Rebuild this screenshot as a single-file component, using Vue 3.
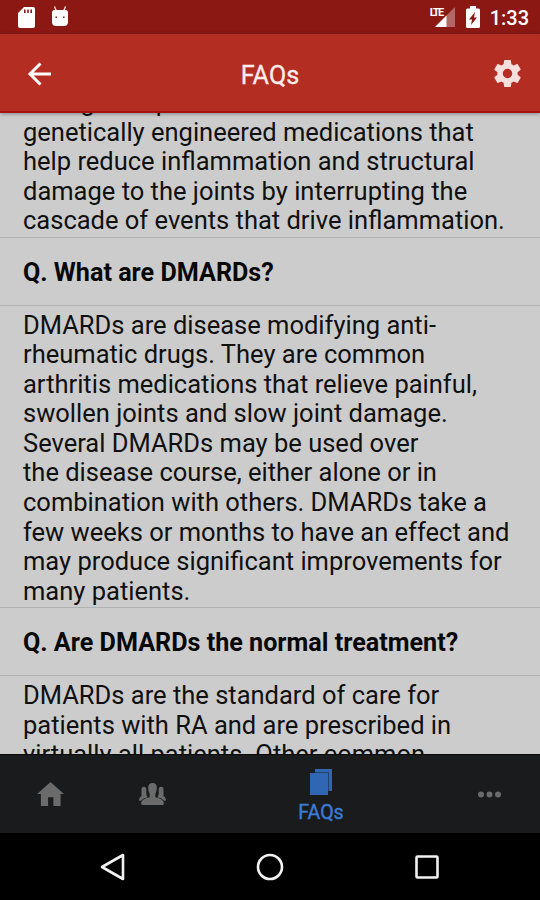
<template>
  <div class="screen">
    <div class="status-bar">
      <svg class="status-sd" viewBox="0 0 17 21">
        <path
          fill="#fff"
          fill-rule="evenodd"
          d="M6 0h9q2 0 2 2v17q0 2-2 2H2q-2 0-2-2V6zM6 2.500V6h1.600V2.500zM9.200 2.500V6h1.600V2.500zM12.400 2.500V6H14V2.500z"
        />
      </svg>
      <svg class="status-bug" viewBox="0 0 18 21">
        <path d="M3.500 0.500l2 5M14.500 0.500l-2 5" stroke="#f3cfcd" stroke-width="1.500" />
        <path
          fill="#fff"
          fill-rule="evenodd"
          d="M3 4h12Q17 4 17 6.500V16q0 4-4 4H5q-4 0-4-4V6.500Q1 4 3 4zM4.500 10.500V12H6v-1.500zM12 10.500V12h1.500v-1.500z"
        />
      </svg>
      <div class="status-right">
        <div class="signal">
          <span class="lte">LTE</span>
          <svg viewBox="0 0 21 21">
            <path fill="#fff" fill-opacity="0.35" d="M21 0v20H1z" />
            <path fill="#fff" d="M12.500 8.500V20H1z" />
          </svg>
        </div>
        <svg class="battery" viewBox="0 0 14 22">
          <path
            fill="#fff"
            fill-rule="evenodd"
            d="M4 0h6v2.500h2.500Q14 2.500 14 4v16.500q0 1.500-1.500 1.500h-11Q0 22 0 20.500V4q0-1.500 1.500-1.500H4zM9 6l-6 7.500h3L5 19l6-7.500H8z"
          />
        </svg>
        <span class="clock">1:33</span>
      </div>
    </div>

    <header class="header">
      <svg class="back" viewBox="0 0 24 24">
        <path
          d="M23.500 12H3M13 1.500L2.500 12 13 22.500"
          fill="none"
          stroke="#fff"
          stroke-width="3"
        />
      </svg>
      <h1 class="title">FAQs</h1>
      <svg class="gear" viewBox="2 2 20 20">
        <path
          fill="#f6dedd"
          d="M19.430 12.980c.040-.320.070-.640.070-.980s-.030-.660-.070-.980l2.110-1.650c.190-.150.240-.420.120-.640l-2-3.460c-.120-.220-.390-.300-.610-.220l-2.490 1c-.520-.400-1.080-.730-1.690-.980l-.380-2.650C14.460 2.180 14.250 2 14 2h-4c-.250 0-.460.180-.490.420l-.380 2.650c-.610.250-1.170.590-1.690.980l-2.490-1c-.230-.090-.490 0-.610.220l-2 3.460c-.130.220-.070.490.120.640l2.110 1.650c-.040.320-.070.650-.070.980s.030.660.070.980l-2.110 1.650c-.190.150-.240.420-.120.640l2 3.460c.120.220.390.300.610.220l2.490-1c.520.400 1.080.730 1.690.980l.380 2.650c.030.240.240.420.490.420h4c.250 0 .460-.180.490-.420l.380-2.650c.610-.250 1.170-.590 1.690-.980l2.490 1c.230.090.490 0 .610-.220l2-3.460c.120-.220.070-.490-.120-.640zM12 15.500a3.500 3.500 0 1 1 0-7 3.500 3.500 0 0 1 0 7z"
        />
      </svg>
    </header>

    <main class="content">
      <div class="list">
        <template v-for="item in faqs" :key="item.answer[0]">
          <h2 v-if="item.question" class="question">Q. {{ item.question }}</h2>
          <div class="answer">
            <div v-for="line in item.answer" :key="line">{{ line }}</div>
          </div>
        </template>
      </div>
    </main>

    <nav class="tabs">
      <a class="tab">
        <svg class="home" viewBox="0 0 28 25">
          <path fill="currentColor" d="M14 0l14 12.500h-3.500V25H17v-9h-5.500v9H4V12.500H0z" />
        </svg>
      </a>
      <a class="tab">
        <svg class="people" viewBox="0 0 28 23">
          <g fill="currentColor">
            <path
              d="M5 4q2.500 0 2.500 3v4q0 2 1.500 4-5 1-7 3.500H0q0-4 2.500-5V7Q2.500 4 5 4zM23 4q-2.500 0-2.500 3v4q0 2-1.500 4 5 1 7 3.500h2q0-4-2.500-5V7q0-3-2.500-3z"
            />
            <path
              d="M14 0q4.500 0 4.500 5 0 4-1.500 6.500V15q9 2 9 6.500 0 1.500-1.500 1.500h-21Q2 23 2 21.500 2 17 11 15v-3.500Q9.500 9 9.500 5q0-5 4.500-5z"
            />
          </g>
        </svg>
      </a>
      <a class="tab active">
        <svg class="docs" viewBox="0 0 22 26">
          <path fill="currentColor" d="M5 0h17v22h-3V3H5z" />
          <path fill="currentColor" fill-opacity="0.5" d="M5 3h14v19h-1V4H5z" />
          <path fill="currentColor" d="M0 4h18v22H0z" />
        </svg>
        <span class="tab-label">FAQs</span>
      </a>
      <a class="tab">
        <svg class="more" viewBox="0 0 23 7">
          <g fill="currentColor">
            <circle cx="3" cy="3.500" r="3" />
            <circle cx="11.500" cy="3.500" r="3" />
            <circle cx="20" cy="3.500" r="3" />
          </g>
        </svg>
      </a>
    </nav>

    <div class="system-nav">
      <svg viewBox="0 0 28 28">
        <path d="M24 2v24L3 14z" />
      </svg>
      <svg viewBox="0 0 28 28">
        <circle cx="14" cy="14" r="12" />
      </svg>
      <svg viewBox="0 0 28 28">
        <rect x="3.500" y="3.500" width="21" height="21" rx="1" />
      </svg>
    </div>
  </div>
</template>

<script setup>
const faqs = [
  {
    answer: [
      "Biologic response modifiers are",
      "genetically engineered medications that",
      "help reduce inflammation and structural",
      "damage to the joints by interrupting the",
      "cascade of events that drive inflammation.",
    ],
  },
  {
    question: "What are DMARDs?",
    answer: [
      "DMARDs are disease modifying anti-",
      "rheumatic drugs. They are common",
      "arthritis medications that relieve painful,",
      "swollen joints and slow joint damage.",
      "Several DMARDs may be used over",
      "the disease course, either alone or in",
      "combination with others. DMARDs take a",
      "few weeks or months to have an effect and",
      "may produce significant improvements for",
      "many patients.",
    ],
  },
  {
    question: "Are DMARDs the normal treatment?",
    answer: [
      "DMARDs are the standard of care for",
      "patients with RA and are prescribed in",
      "virtually all patients. Other common",
    ],
  },
];
</script>

<style>
body {
  margin: 0;
  background-color: #000000;
}
</style>

<style scoped>
.screen {
  width: 540px;
  height: 900px;
  display: flex;
  flex-direction: column;
  overflow: hidden;
  background-color: #000000;
  font-family: Roboto, "Liberation Sans", sans-serif;
}
svg {
  display: block;
  flex: none;
}
.status-bar {
  height: 34px;
  flex: none;
  box-sizing: border-box;
  display: flex;
  align-items: flex-start;
  padding: 7px 11px 0 18px;
  background-color: #8b1813;
  color: #ffffff;
}
.status-sd {
  width: 17px;
  height: 21px;
}
.status-bug {
  width: 18px;
  height: 21px;
  margin: -1px 0 0 16px;
}
.status-right {
  display: flex;
  align-items: flex-start;
  margin-left: auto;
}
.signal {
  position: relative;
  padding-left: 5px;
  margin-right: 11px;
}
.signal svg {
  width: 21px;
  height: 21px;
}
.lte {
  position: absolute;
  top: 0;
  left: 1px;
  font-size: 11px;
  line-height: 11px;
  font-weight: 700;
  letter-spacing: -1.6px;
}
.battery {
  width: 14px;
  height: 22px;
  margin-top: -1px;
}
.clock {
  margin: 1px 0 0 10px;
  font-size: 20px;
  line-height: 20px;
  font-weight: 500;
}
.header {
  height: 79px;
  flex: none;
  box-sizing: border-box;
  display: flex;
  align-items: center;
  justify-content: space-between;
  padding: 2px 19px 0 27px;
  position: relative;
  z-index: 1;
  background-color: #b42d23;
  border-bottom: 2px solid #a51410;
  box-shadow: 0 1px 4px rgba(0, 0, 0, 0.35);
}
.back {
  width: 25px;
  height: 24px;
}
.title {
  margin: 4px 6px 0 0;
  color: #fbeceb;
  font-size: 25.2px;
  line-height: 30px;
  font-weight: 400;
  -webkit-text-stroke: 0.3px #fbeceb;
}
.gear {
  width: 27px;
  height: 29px;
}
.content {
  height: 641px;
  flex: none;
  overflow: hidden;
  background-color: #cccccc;
  color: #101010;
}
.list {
  margin-top: -29px;
}
.question {
  box-sizing: border-box;
  height: 69px;
  margin: 0;
  padding: 0 23px;
  border-top: 1px solid #b2b2b2;
  border-bottom: 1px solid #b2b2b2;
  color: #080808;
  font-size: 25.15px;
  line-height: 69.5px;
  font-weight: 700;
  white-space: nowrap;
}
.answer {
  padding: 4px 23px 1px;
  font-size: 25.5px;
  line-height: 29.55px;
  white-space: nowrap;
}
.question + .answer {
  padding-top: 5px;
  padding-bottom: 1px;
}
.tabs {
  height: 79px;
  flex: none;
  box-sizing: border-box;
  display: grid;
  grid-template-columns: 101px 102px 236px 101px;
  border-top: 1px solid #090a0b;
  background-color: #191b1c;
}
.tab {
  display: flex;
  flex-direction: column;
  align-items: center;
  justify-content: center;
  color: #6b6b6b;
}
.tab.active {
  padding-top: 5px;
  color: #2f67b5;
}
.home {
  width: 27px;
  height: 24px;
}
.people {
  width: 27px;
  height: 22px;
}
.docs {
  width: 22px;
  height: 26px;
}
.more {
  width: 23px;
  height: 7px;
}
.tab-label {
  margin-top: 6px;
  color: #3b7bd8;
  font-size: 19.6px;
  line-height: 24px;
  -webkit-text-stroke: 0.4px #3b7bd8;
}
.system-nav {
  height: 67px;
  flex: none;
  display: flex;
  align-items: center;
  justify-content: center;
  gap: 129px;
}
.system-nav svg {
  width: 28px;
  height: 28px;
  fill: none;
  stroke: #f2f2f2;
  stroke-width: 2.6;
  stroke-linejoin: round;
}
</style>
